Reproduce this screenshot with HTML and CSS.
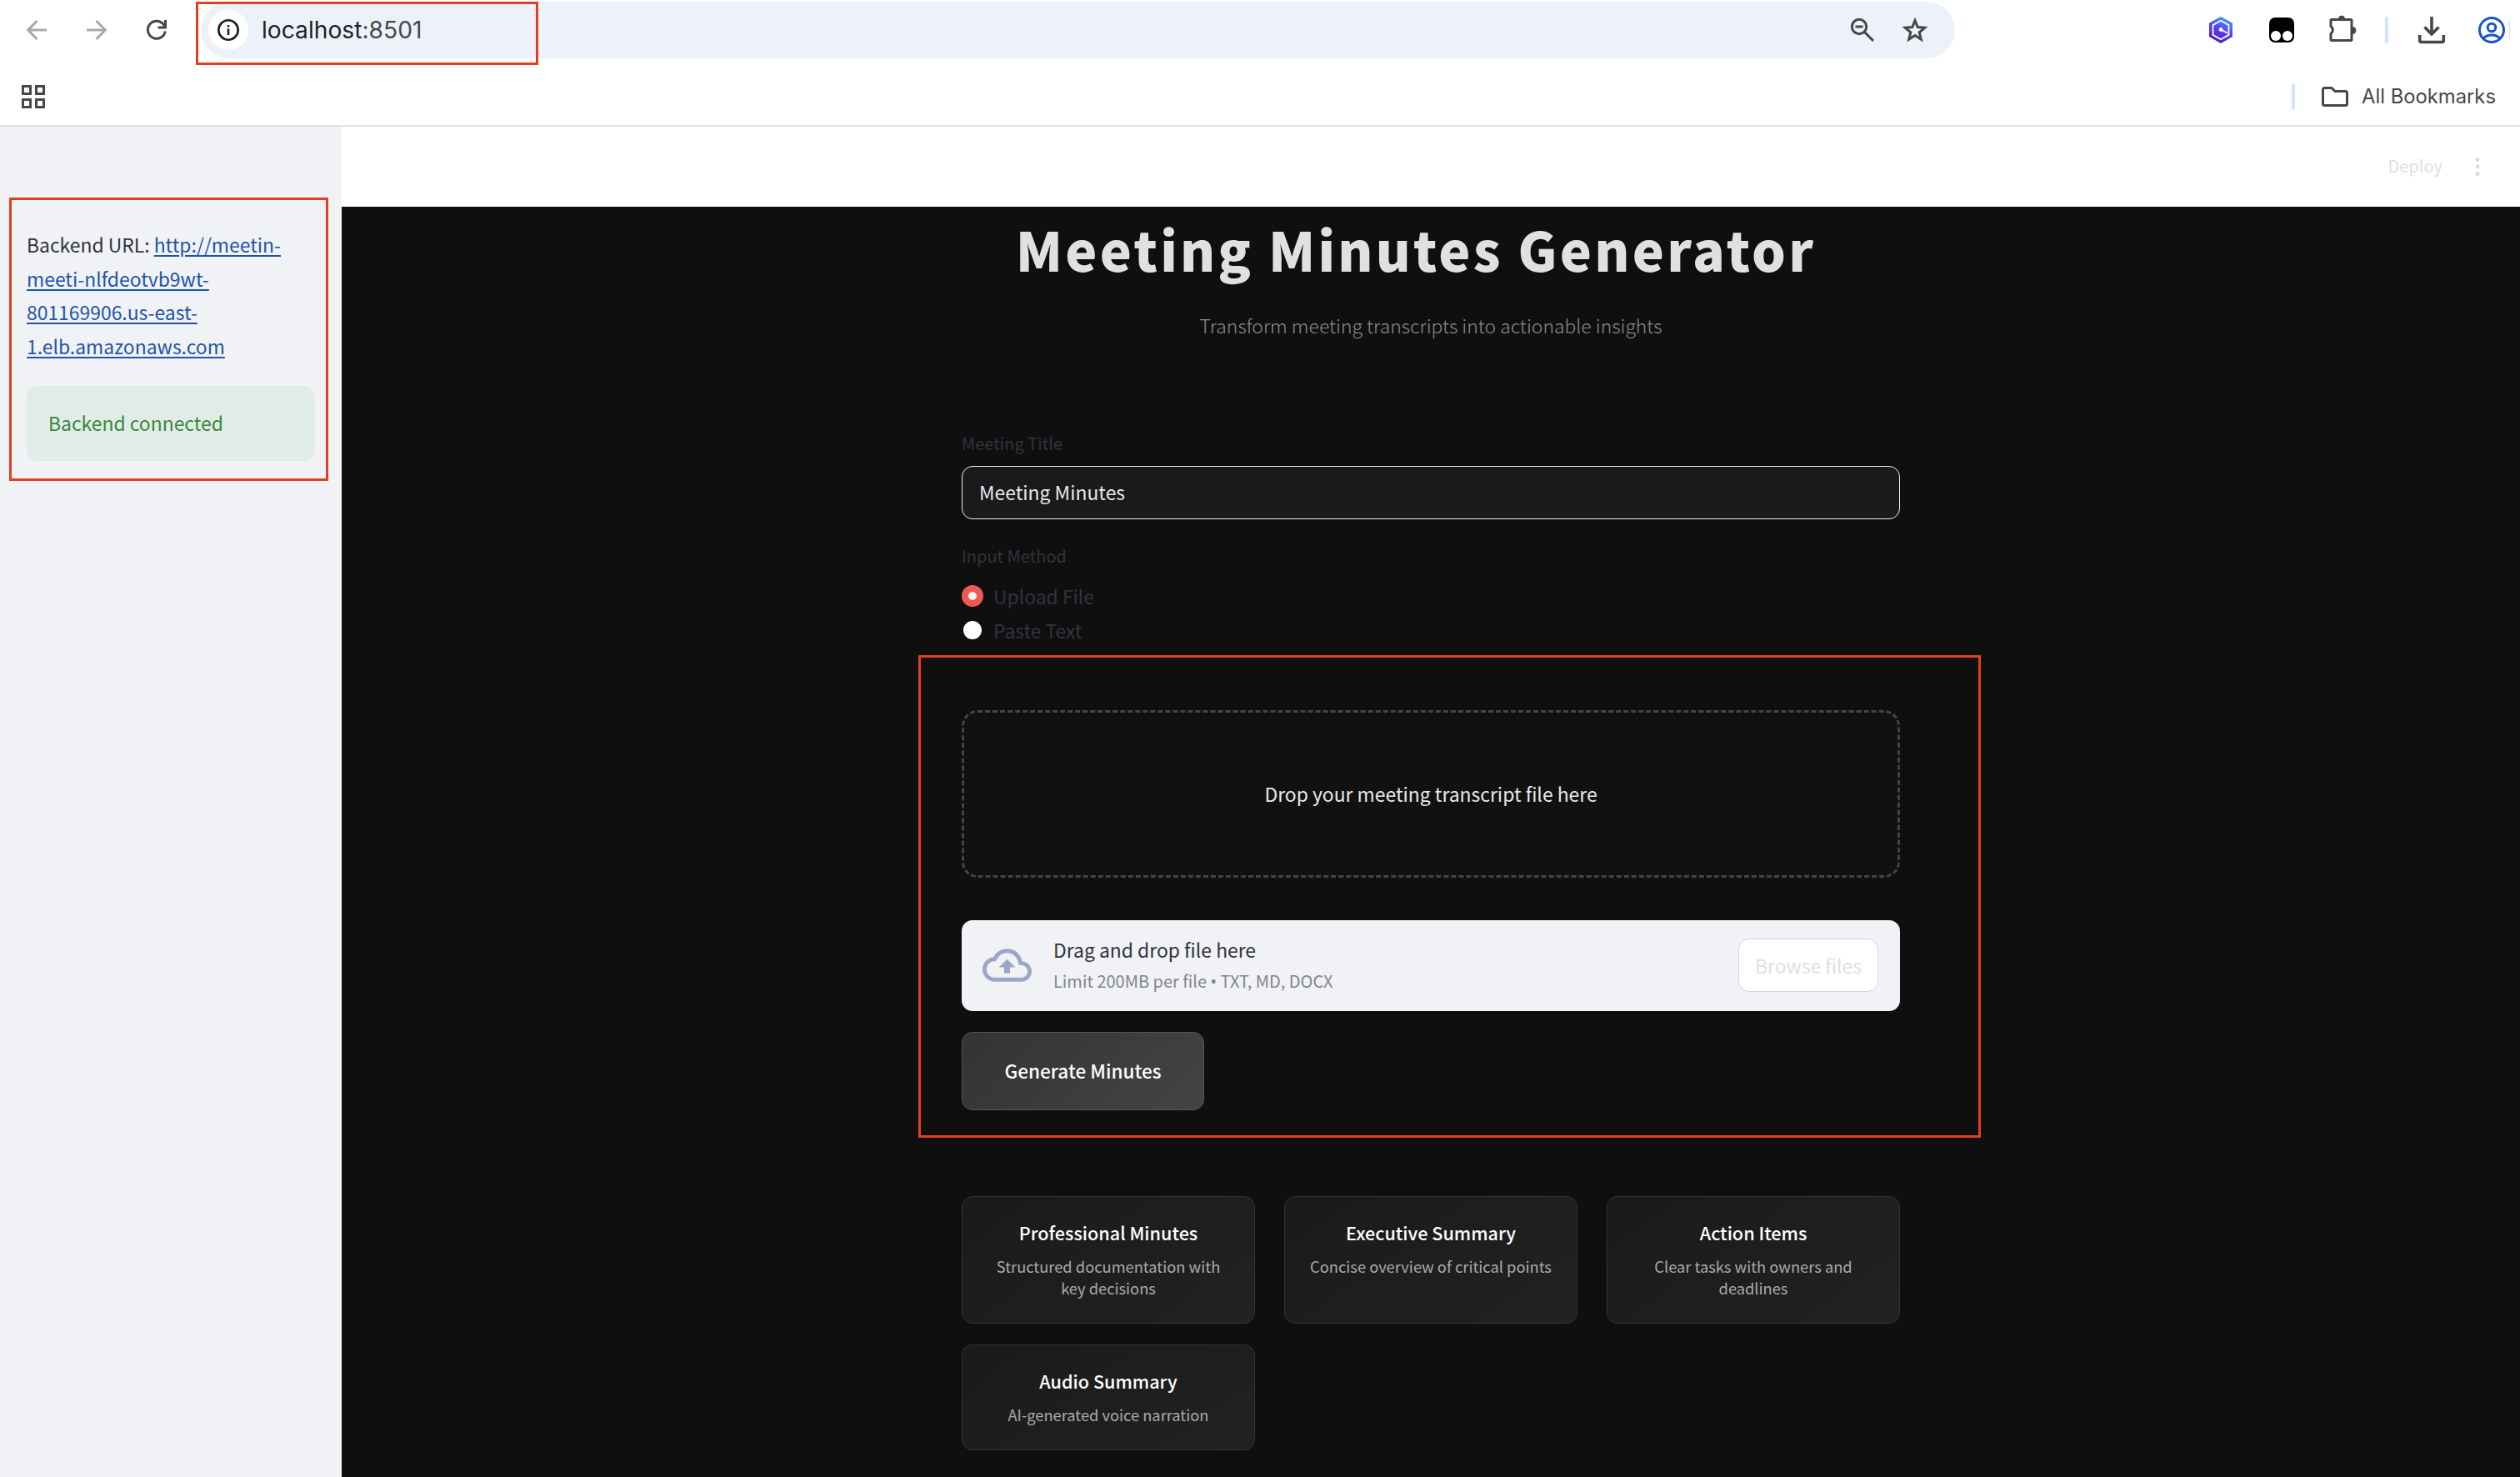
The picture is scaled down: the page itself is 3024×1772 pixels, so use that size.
FILE: index.html
```
<!DOCTYPE html>
<html lang="en">
<head>
    <meta charset="UTF-8">
    <meta name="viewport" content="width=device-width, initial-scale=1.0">
    <title>Meeting Minutes Generator</title>
    <link rel="stylesheet" href="styles.css">
</head>
<body>
    <div class="browser">
        <div class="toolbar">
            <div class="nav">
                <svg class="muted" width="24" height="24" viewBox="0 0 24 24"><path d="M24 12H2M12.5 1 1.7 12l10.800 11"/></svg>
                <svg class="muted" width="24" height="24" viewBox="0 0 24 24"><path d="M0 12h22M11.500 1l10.800 11-10.800 11"/></svg>
                <svg width="24" height="24" viewBox="0 0 24 24"><path d="M22.300 13.500A10.500 10.500 0 1 1 19.500 4.500L22.500 8M22.500 0v9h-9"/></svg>
            </div>
            <div class="address">
                <span class="info"><svg width="26" height="26" viewBox="0 0 26 26"><circle cx="13" cy="13" r="11.700"/><path d="M13 11.500V19M13 7v2.500"/></svg></span>
                <span class="host">localhost<span class="port">:8501</span></span>
                <svg class="search" width="30" height="30" viewBox="0 0 30 30"><circle cx="11" cy="11" r="8.700"/><path d="M6.500 11h9M17.500 17.500 28 28"/></svg>
                <svg class="star" width="30" height="30" viewBox="0 0 30 30"><path d="m15 3.500 3.200 8 8.600.700-6.600 5.600 2.100 8.400-7.300-4.600-7.300 4.600 2.100-8.400L3.200 12.200l8.600-.700z"/></svg>
            </div>
            <div class="extensions">
                <svg class="hex" width="30" height="32" viewBox="0 0 30 32">
                    <defs><linearGradient id="hexFill" x1=".7" y1="0" x2=".3" y2="1"><stop offset="0" stop-color="#3fa2ff"/><stop offset=".5" stop-color="#5b3dfa"/><stop offset="1" stop-color="#4a1aa8"/></linearGradient></defs>
                    <path class="fill" d="M15 0l14 7.500v16.500L15 32 1 24V7.500z" fill="url(#hexFill)"/>
                    <path class="white" d="M15 4.800l9.500 5.300v11.800L15 27.200l-9.500-5.300V10.100zM15 15.500l8 4.200"/>
                    <circle class="hub" cx="15" cy="15.500" r="2.400"/>
                </svg>
                <svg class="monkey" width="30" height="30" viewBox="0 0 30 30"><rect class="fill" width="30" height="30" rx="7"/><circle class="eye" cx="8" cy="22" r="6"/><circle class="eye" cx="22" cy="22" r="6"/></svg>
                <svg class="puzzle" width="34" height="34" viewBox="0 0 34 34"><path d="M5 6.500h23a1 1 0 0 1 1 1v23a1 1 0 0 1-1 1H5a1 1 0 0 1-1-1v-7a5.500 5.500 0 0 0 0-9v-7a1 1 0 0 1 1-1z"/><path class="tab" d="M13.500 5.500a3.500 3.500 0 0 1 7 0zM30 15.500a4 4 0 0 1 0 8z"/></svg>
                <span class="divider"></span>
                <svg class="download" width="32" height="32" viewBox="0 0 32 32"><path d="M16 0v20M7.500 12.500 16 21l8.500-8.500M1.700 22v6.500a2 2 0 0 0 2 2h24.600a2 2 0 0 0 2-2V22"/></svg>
                <svg class="profile" width="32" height="32" viewBox="0 0 32 32"><circle cx="16" cy="16" r="14.500"/><circle cx="16" cy="13" r="4.800"/><path d="M6 26c5.500-5.300 14.500-5.300 20 0"/><path class="edge" d="M37 6q1.500 10 0 20"/></svg>
            </div>
        </div>
        <div class="bookmarks">
            <svg class="apps" width="28" height="28" viewBox="0 0 28 28"><path d="M1.500 1.500h9v9h-9zM17.500 1.500h9v9h-9zM1.500 17.500h9v9h-9zM17.500 17.500h9v9h-9z"/></svg>
            <span class="divider"></span>
            <svg class="folder" width="32" height="24" viewBox="0 0 32 24"><path d="M3.500 1.500h8.500l4 4h12.500a2 2 0 0 1 2 2v13a2 2 0 0 1-2 2h-25a2 2 0 0 1-2-2v-17a2 2 0 0 1 2-2z"/></svg>
            <span class="all-bookmarks">All Bookmarks</span>
        </div>
    </div>

    <div class="app">
        <aside class="sidebar">
            <p class="backend">Backend URL: <a href="#">http://meetin-<br>meeti-nlfdeotvb9wt-<br>801169906.us-east-<br>1.elb.amazonaws.com</a></p>
            <div class="alert">Backend connected</div>
        </aside>
        <div class="page">
            <header class="app-header">
                <span class="deploy">Deploy</span>
                <svg class="dots" width="6" height="24" viewBox="0 0 6 24"><circle cx="3" cy="3.500" r="2.400"/><circle cx="3" cy="12" r="2.400"/><circle cx="3" cy="20.500" r="2.400"/></svg>
            </header>
            <main class="main">
                <h1>Meeting Minutes Generator</h1>
                <p class="subtitle">Transform meeting transcripts into actionable insights</p>

                <div class="label">Meeting Title</div>
                <div class="text-input">Meeting Minutes</div>

                <div class="label method">Input Method</div>
                <div class="radio"><span class="dot checked"></span>Upload File</div>
                <div class="radio"><span class="dot"></span>Paste Text</div>

                <div class="drop-zone">Drop your meeting transcript file here</div>

                <div class="uploader">
                    <svg class="cloud" width="62" height="62" viewBox="0 0 24 24"><path d="M19.350 10.040A7.490 7.490 0 0 0 12 4C9.110 4 6.600 5.640 5.350 8.040A5.994 5.994 0 0 0 0 14c0 3.310 2.690 6 6 6h13c2.760 0 5-2.240 5-5 0-2.640-2.050-4.780-4.650-4.960zM19 18H6c-2.210 0-4-1.790-4-4 0-2.050 1.530-3.760 3.560-3.970l1.070-.110.500-.950A5.469 5.469 0 0 1 12 6c2.620 0 4.880 1.860 5.390 4.430l.300 1.500 1.530.110A2.980 2.980 0 0 1 22 15c0 1.650-1.350 3-3 3zM8 13h2.550v3h2.900v-3H16l-4-4z"/></svg>
                    <div class="upload-text">
                        <span class="upload-title">Drag and drop file here</span>
                        <span class="upload-hint">Limit 200MB per file <span class="bullet">•</span> TXT, MD, DOCX</span>
                    </div>
                    <button class="browse">Browse files</button>
                </div>
                <button class="generate">Generate Minutes</button>

                <div class="cards">
                    <div class="card"><h3>Professional Minutes</h3><p>Structured documentation with<br>key decisions</p></div>
                    <div class="card"><h3>Executive Summary</h3><p>Concise overview of critical points</p></div>
                    <div class="card"><h3>Action Items</h3><p>Clear tasks with owners and<br>deadlines</p></div>
                    <div class="card"><h3>Audio Summary</h3><p>AI-generated voice narration</p></div>
                </div>
            </main>
        </div>
    </div>

    <!-- highlight boxes over the page -->
    <div class="mark mark-url"></div>
    <div class="mark mark-backend"></div>
    <div class="mark mark-upload"></div>
</body>
</html>
```

FILE: styles.css
```
* {
    box-sizing: border-box;
}
body {
    margin: 0;
    width: 3024px;
    height: 1772px;
    overflow: hidden;
    position: relative;
    background: white;
    font-family: "Noto Sans CJK SC", "Noto Sans", sans-serif;
    font-size: 22.9px;
    line-height: 40.6px;
}
h1, h3, p {
    margin: 0;
}
svg {
    display: block;
    flex: none;
    overflow: visible;
}

/* Browser bar */
.browser {
    height: 152px;
    border-bottom: 2px solid #e1e1e1;
    font-family: Inter, sans-serif;
}
.browser svg {
    fill: none;
    stroke: #474747;
    stroke-width: 3;
}
.browser svg .fill {
    stroke: none;
}
.toolbar {
    display: flex;
    align-items: center;
    height: 72px;
    padding-left: 32px;
}
.nav {
    display: flex;
    gap: 48px;
    width: 209px;
}
.browser .nav .muted {
    stroke: #a9a9a9;
}
.address {
    display: flex;
    align-items: center;
    width: 2105px;
    height: 68px;
    padding-left: 9px;
    border-radius: 34px;
    background: #edf2fa;
}
.info {
    display: flex;
    align-items: center;
    justify-content: center;
    width: 48px;
    height: 48px;
    border-radius: 50%;
    background: white;
}
.browser .info svg {
    stroke: #1f1f1f;
    stroke-width: 2.6;
}
.host {
    margin-left: 16px;
    font-size: 28.2px;
    color: #1f1f1f;
}
.port {
    color: #474747;
}
.search {
    margin-left: auto;
}
.star {
    margin: 0 33px;
}
.extensions {
    display: flex;
    align-items: center;
    margin-left: 304px;
}
.browser .hex .white {
    stroke: white;
    stroke-width: 1.8;
}
.browser .hex .hub {
    fill: white;
    stroke: none;
}
.monkey {
    margin-left: 43px;
}
.browser .monkey .fill {
    fill: black;
}
.browser .monkey .eye {
    fill: white;
    stroke: none;
}
.puzzle {
    margin-left: 40px;
    margin-top: -4px;
}
.browser .puzzle .tab {
    fill: #474747;
    stroke-width: 1;
}
.divider {
    width: 4px;
    height: 32px;
    border-radius: 2px;
    background: #d3e3fd;
}
.extensions .divider {
    margin: 0 36px 0 35px;
}
.browser .download {
    stroke-width: 3.6;
}
.browser .profile {
    margin-left: 40px;
    stroke: #1b55c4;
}
.browser .profile .edge {
    stroke: #d3e3fd;
    stroke-width: 1.5;
}
.bookmarks {
    display: flex;
    align-items: center;
    height: 88px;
    padding: 0 30px 0 26px;
}
.apps {
    margin-right: auto;
}
.folder {
    margin: 0 16px 0 32px;
}
.all-bookmarks {
    width: 160px;
    font-size: 23.8px;
    white-space: nowrap;
    color: #474747;
}

/* Layout */
.app {
    display: flex;
    height: 1620px;
}
.sidebar {
    width: 410px;
    padding: 121px 32px 0;
    background: #f0f2f6;
    color: #31333f;
}
.backend {
    white-space: nowrap;
}
.backend a {
    color: #1f55a5;
    text-underline-offset: 3px;
    text-decoration-thickness: 2px;
}
.alert {
    height: 90px;
    margin-top: 28px;
    padding: 24px 26px;
    border-radius: 13px;
    background: #e1ece6;
    color: #3b8640;
}
.page {
    flex: 1;
    background: #0f0f0f;
}
.app-header {
    display: flex;
    align-items: center;
    justify-content: flex-end;
    height: 96px;
    padding-right: 48px;
    background: white;
    color: #dfdfdf;
}
.deploy {
    margin-right: 39px;
    padding-bottom: 1px;
    font-size: 20px;
}
.dots {
    fill: #d9d9d9;
}
.main {
    width: 1126px;
    margin: 0 auto;
}
h1 {
    height: 100px;
    padding-right: 36px;
    font-size: 64.2px;
    line-height: 100px;
    font-weight: 900;
    letter-spacing: 3.2px;
    text-align: center;
    white-space: nowrap;
    color: #e0e0e0;
}
.subtitle {
    margin-top: 22px;
    font-weight: 300;
    text-align: center;
    color: #8c8c8c;
}

/* Form */
.label {
    height: 34px;
    margin-top: 104px;
    font-size: 20px;
    line-height: 34px;
    color: #31333f;
}
.text-input {
    height: 64px;
    margin-top: 10px;
    padding: 0 20px;
    border: 1px solid #f0f0f0;
    border-radius: 13px;
    background: #1a1a1a;
    line-height: 60px;
    color: #e8e8e8;
}
.label.method {
    margin-top: 27px;
    margin-bottom: 11px;
}
.radio {
    display: flex;
    align-items: center;
    height: 41px;
    line-height: 39px;
    color: #31333f;
}
.dot {
    width: 26px;
    height: 26px;
    margin-right: 12px;
    border: 2px solid #0f0f0f;
    border-radius: 50%;
    background: white;
}
.dot.checked {
    border: 8px solid #ee5a52;
    background: #f0f2f6;
}
.drop-zone {
    height: 201px;
    margin-top: 75px;
    border: 3px dashed #444;
    border-radius: 19px;
    background: #111;
    line-height: 194px;
    text-align: center;
    color: #e8e8e8;
}
.uploader {
    display: flex;
    align-items: center;
    height: 109px;
    margin-top: 51px;
    padding: 0 26px 0 25px;
    border-radius: 13px;
    background: #f0f2f6;
}
.cloud {
    width: 59px;
    margin-right: 26px;
    fill: #9ba7c6;
}
.upload-text {
    display: flex;
    flex-direction: column;
    padding-bottom: 2px;
    color: #31333f;
}
.upload-title {
    line-height: 40px;
}
.upload-hint {
    font-size: 20px;
    line-height: 35px;
    color: #83858d;
}
.bullet {
    font-family: "Noto Sans", sans-serif;
}
button {
    font-family: inherit;
    font-size: inherit;
    white-space: nowrap;
}
.browse {
    width: 168px;
    height: 64px;
    margin-left: auto;
    padding: 0 0 1px;
    border: 1px solid #d5d6d8;
    border-radius: 13px;
    background: white;
    color: #e0e0e0;
}
.generate {
    display: block;
    width: 291px;
    height: 94px;
    margin-top: 25px;
    padding-bottom: 3px;
    border: 1px solid #555;
    border-radius: 13px;
    background: linear-gradient(135deg, #333, #444);
    font-size: 22.5px;
    font-weight: 500;
    color: white;
}
.cards {
    display: grid;
    grid-template-columns: repeat(3, 352px);
    grid-template-rows: 153px 127px;
    gap: 25px 35px;
    margin-top: 103px;
}
.card {
    padding-top: 23px;
    border: 1px solid #333;
    border-radius: 13px;
    background: linear-gradient(145deg, #1a1a1a, #222);
    text-align: center;
    white-space: nowrap;
}
.card h3 {
    font-size: 21.6px;
    line-height: 40px;
    font-weight: 500;
    color: white;
}
.card p {
    margin-top: 7px;
    font-size: 18.3px;
    line-height: 26px;
    color: #aaa;
}

/* Highlight boxes */
.mark {
    position: absolute;
    border: 3px solid #e0401f;
}
.mark-url {
    left: 235px;
    top: 2px;
    width: 411px;
    height: 76px;
}
.mark-backend {
    left: 11px;
    top: 237px;
    width: 383px;
    height: 340px;
}
.mark-upload {
    left: 1102px;
    top: 786px;
    width: 1275px;
    height: 579px;
}
```
